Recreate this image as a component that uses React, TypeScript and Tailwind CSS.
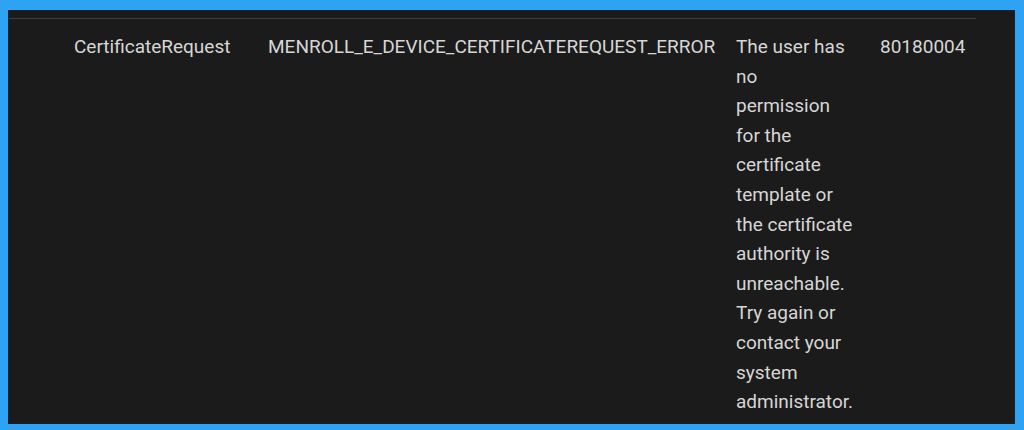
import React from "react";

const lines = [
  "The user has",
  "no",
  "permission",
  "for the",
  "certificate",
  "template or",
  "the certificate",
  "authority is",
  "unreachable.",
  "Try again or",
  "contact your",
  "system",
  "administrator.",
];

export default function App() {
  return (
    <div className="w-[1024px] h-[430px] bg-[#2ea3f4] pt-[10px] pl-[8px] pr-[9px] pb-[6px]">
      <div className="h-full bg-[#1b1b1b] border border-[#14202a] pt-[7px] pr-[38px] flex flex-col">
        <div className="h-px bg-[#3c3c3c]" />
        <div
          className="flex items-start pt-[13px] text-[19px] leading-[29.6px] text-[#d6d6d6]"
          style={{ fontFamily: "Roboto, 'Noto Sans', sans-serif" }}
        >
          <div className="w-[259px] pl-[65px] shrink-0">CertificateRequest</div>
          <div className="w-[468px] shrink-0">MENROLL_E_DEVICE_CERTIFICATEREQUEST_ERROR</div>
          <div className="w-[144px] shrink-0 flex flex-col">
            {lines.map((l) => (
              <span key={l}>{l}</span>
            ))}
          </div>
          <div>80180004</div>
        </div>
      </div>
    </div>
  );
}
